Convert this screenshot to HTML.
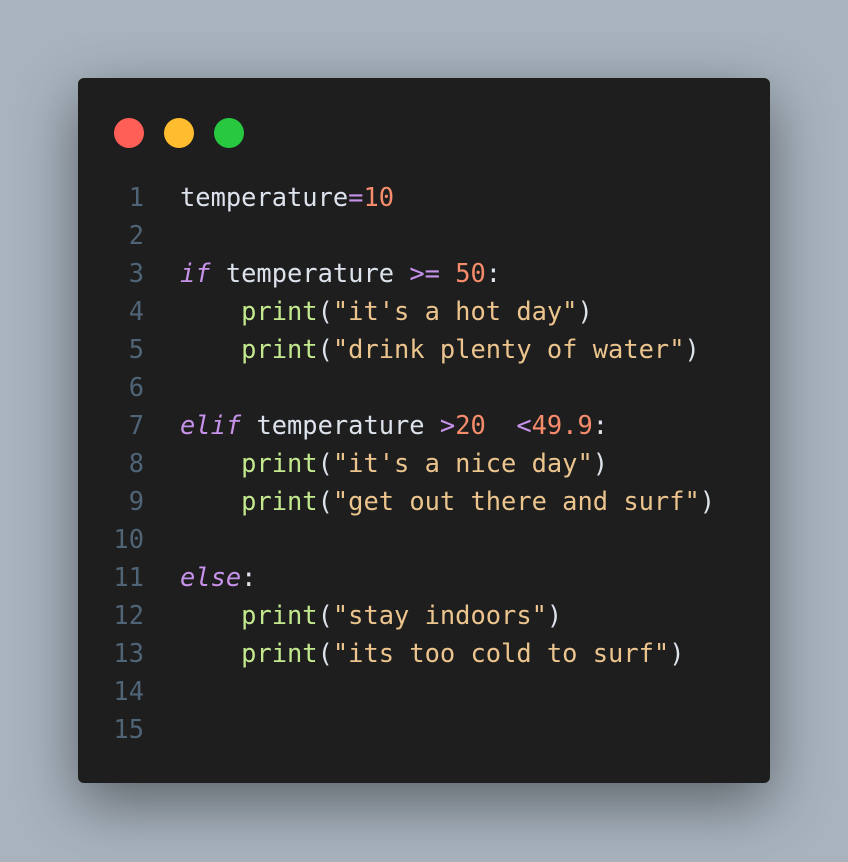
<!DOCTYPE html>
<html><head><style>
html,body{margin:0;padding:0;width:848px;height:862px;overflow:hidden;background:#a8b3be;}
.card{position:absolute;left:78px;top:78px;width:692px;height:705px;background:#1e1e1e;border-radius:6px;box-shadow:0 20px 60px rgba(0,0,0,.45);}
.dot{position:absolute;top:40px;width:30px;height:30px;border-radius:50%;}
.code{position:absolute;left:0;top:100px;font-family:"DejaVu Sans Mono","Liberation Mono",monospace;font-size:25.4px;color:#dde3ec;}
.l{height:38px;line-height:38px;white-space:pre;position:relative;}
.n{position:absolute;left:0;width:66px;text-align:right;color:#4f6476;}
.c{position:absolute;left:102px;}
.k{color:#c792ea;font-style:italic}.o{color:#c792ea}.num{color:#f78c6c}.s{color:#ecc48d}.f{color:#c3e88d}
</style></head><body>
<div class="card">
<div class="dot" style="left:36px;background:#ff5f57"></div>
<div class="dot" style="left:86px;background:#febc2e"></div>
<div class="dot" style="left:136px;background:#28c840"></div>
<div class="code">
<div class="l"><span class="n">1</span><span class="c">temperature<span class="o">=</span><span class="num">10</span></span></div>
<div class="l"><span class="n">2</span></div>
<div class="l"><span class="n">3</span><span class="c"><span class="k">if</span> temperature <span class="o">&gt;=</span> <span class="num">50</span>:</span></div>
<div class="l"><span class="n">4</span><span class="c">    <span class="f">print</span>(<span class="s">"it's a hot day"</span>)</span></div>
<div class="l"><span class="n">5</span><span class="c">    <span class="f">print</span>(<span class="s">"drink plenty of water"</span>)</span></div>
<div class="l"><span class="n">6</span></div>
<div class="l"><span class="n">7</span><span class="c"><span class="k">elif</span> temperature <span class="o">&gt;</span><span class="num">20</span>  <span class="o">&lt;</span><span class="num">49.9</span>:</span></div>
<div class="l"><span class="n">8</span><span class="c">    <span class="f">print</span>(<span class="s">"it's a nice day"</span>)</span></div>
<div class="l"><span class="n">9</span><span class="c">    <span class="f">print</span>(<span class="s">"get out there and surf"</span>)</span></div>
<div class="l"><span class="n">10</span></div>
<div class="l"><span class="n">11</span><span class="c"><span class="k">else</span>:</span></div>
<div class="l"><span class="n">12</span><span class="c">    <span class="f">print</span>(<span class="s">"stay indoors"</span>)</span></div>
<div class="l"><span class="n">13</span><span class="c">    <span class="f">print</span>(<span class="s">"its too cold to surf"</span>)</span></div>
<div class="l"><span class="n">14</span></div>
<div class="l"><span class="n">15</span></div>
</div>
</div>
</body></html>
